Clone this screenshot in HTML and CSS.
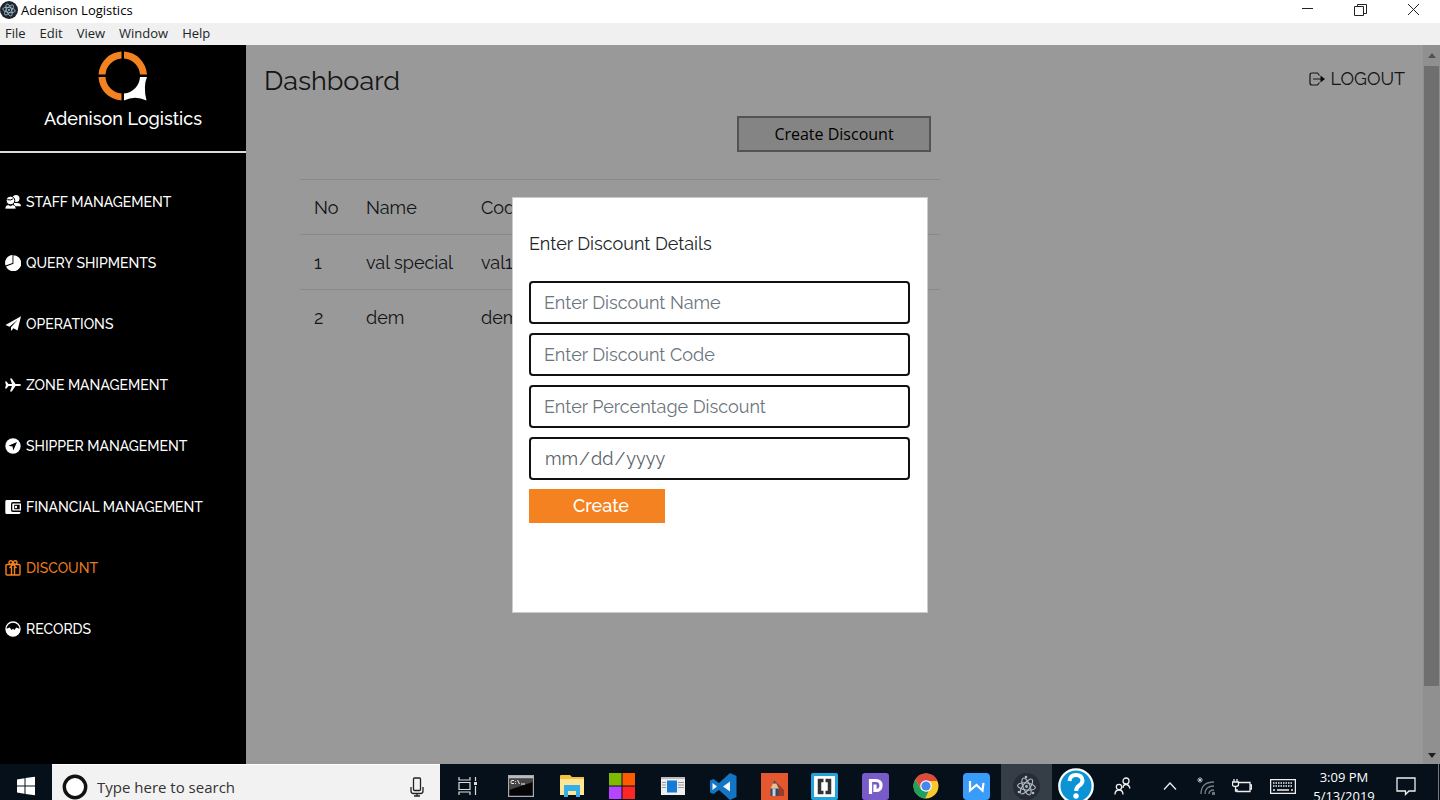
FILE: index.html
```html
<!DOCTYPE html>
<html lang="en">
<head>
<meta charset="utf-8">
<title>Adenison Logistics</title>
<link rel="stylesheet" href="styles.css">
</head>
<body>
<div class="screen">
  <header class="titlebar">
    <svg class="app-icon" viewBox="0 0 18 18" aria-hidden="true"><circle cx="9" cy="9" r="9" fill="#20242f"/><g fill="none" stroke="#9fc4cf" stroke-width=".8"><ellipse cx="9" cy="9" rx="6.3" ry="2.5" transform="rotate(10 9 9)"/><ellipse cx="9" cy="9" rx="6.3" ry="2.5" transform="rotate(70 9 9)"/><ellipse cx="9" cy="9" rx="6.3" ry="2.5" transform="rotate(130 9 9)"/></g><circle cx="9" cy="9" r="1" fill="#9fc4cf"/></svg>
    <span class="title">Adenison Logistics</span>
    <div class="window-controls">
      <button class="window-button" aria-label="Minimize"><svg width="13" height="13" viewBox="0 0 13 13"><path d="M1 4.500h11"/></svg></button>
      <button class="window-button" aria-label="Restore"><svg width="13" height="13" viewBox="0 0 13 13"><path d="M.5 2.500h9v9h-9zM3.500 2.500v-2h9v9h-3"/></svg></button>
      <button class="window-button" aria-label="Close"><svg width="13" height="13" viewBox="0 0 13 13"><path d="M1 0l11 11M12 0L1 11"/></svg></button>
    </div>
  </header>
  <nav class="menubar" aria-label="Application menu">
    <button class="menu-item">File</button>
    <button class="menu-item">Edit</button>
    <button class="menu-item">View</button>
    <button class="menu-item">Window</button>
    <button class="menu-item">Help</button>
  </nav>

  <div class="app">
    <aside class="sidebar">
      <div class="brand">
        <svg width="50" height="50" viewBox="0 0 50 50" aria-hidden="true">
          <g fill="#f58220"><path d="M23.500 .5v7A17.500 17.500 0 0 0 7.500 23.500h-7A24.500 24.500 0 0 1 23.500.5z"/><path d="M26 .5v7a17.500 17.500 0 0 1 16 16h7A24.500 24.500 0 0 0 26 .5z"/><path d="M23.500 49.500v-7A17.500 17.500 0 0 1 7.500 26h-7a24.500 24.500 0 0 0 23 23.500z"/></g>
          <path fill="#fff" d="M42 26h7q-4 9-.5 23.500Q37 44 26 49.500v-7A17.500 17.500 0 0 0 42 26z"/>
        </svg>
        <span class="brand-name">Adenison Logistics</span>
      </div>
      <nav class="nav" aria-label="Main">
        <a class="nav-link" href="#staff"><svg class="nav-icon" viewBox="0 0 16 16"><circle cx="11" cy="4.500" r="3.500"/><path d="M9 9h3c2.500 0 4 1 4 3.200H9z"/><circle cx="5.500" cy="6.500" r="4.300" stroke="#000"/><path stroke="#000" stroke-width=".7" d="M0 15c0-3 1.500-4.200 3.500-4.200Q5.500 12.500 7.500 10.800C9.500 10.800 11 12 11 15z"/><path fill="none" stroke="#000" d="M2.300 5.700q3.500 1 6-1"/></svg>Staff Management</a>
        <a class="nav-link" href="#shipments"><svg class="nav-icon" viewBox="0 0 16 16"><path d="M7.500 0v8L.5 10.500A8 8 0 0 1 7.500 0z"/><path d="M8.400.2a8 8 0 1 1-7.400 11.200L8.400 8.700z"/></svg>Query Shipments</a>
        <a class="nav-link" href="#operations"><svg class="nav-icon" viewBox="0 0 16 16"><path d="M16 .2L.5 9l4 1.700L13 3.500 6 11.300V15l2.500-2.700 4 2.200z"/></svg>Operations</a>
        <a class="nav-link" href="#zones"><svg class="nav-icon" viewBox="0 0 16 16"><path d="M0 4.500h1.500L3.500 7H7L5 1.500h1.800L10.500 7H14q2 0 2 1t-2 1h-3.500l-3.700 5.500H5L7 9H3.500l-2 2.500H0L1 8z"/></svg>Zone Management</a>
        <a class="nav-link" href="#shippers"><svg class="nav-icon" viewBox="0 0 16 16"><circle cx="8" cy="8" r="7.700"/><path fill="#000" d="M12 4L3.500 7.700l4 .8.800 4z"/></svg>Shipper Management</a>
        <a class="nav-link" href="#finance"><svg class="nav-icon" viewBox="0 0 16 16"><path d="M1.500 1H14q1.500 0 1.500 2H8Q6 3 6 5v6q0 2 2 2h7.500q0 2-1.500 2H1.500Q.3 15 .3 13.500v-11Q.3 1 1.500 1z"/><path fill-rule="evenodd" d="M8 4.500h8v7H8q-.7 0-.7-.7V5.200q0-.7.7-.7zm1.200 1.300v4.400h5.500V5.800z"/><circle cx="11" cy="8" r="1.200"/></svg>Financial Management</a>
        <a class="nav-link nav-link-active" href="#discount" aria-current="page"><svg class="nav-icon nav-icon-line" viewBox="0 0 16 16"><path d="M2 4.500h12q1 0 1 1V14q0 1-1 1H2q-1 0-1-1V5.500q0-1 1-1zM6.500 5v10M9.500 5v10M8 4.500L4.500 8M8 4.500L11.500 8"/><circle cx="5.800" cy="2.600" r="1.800"/><circle cx="10.200" cy="2.600" r="1.800"/></svg>Discount</a>
        <a class="nav-link" href="#records"><svg class="nav-icon" viewBox="0 0 16 16"><circle cx="8" cy="8" r="7" fill="none" stroke="#fff" stroke-width="1.300"/><path d="M.8 8l4-1.500L6.500 9 8 7.800 9.500 9l1.700-2.500 4 1.500a7.200 7.200 0 0 1-14.400 0z"/></svg>Records</a>
      </nav>
    </aside>

    <main class="content">
      <div class="content-head">
        <h1 class="page-title">Dashboard</h1>
        <a class="logout" href="#logout"><svg width="16" height="14" viewBox="0 0 16 14" aria-hidden="true"><path fill="none" stroke="#222" stroke-width="1.200" d="M10.500 3.500L8.500 1H3Q1 1 1 3v8q0 2 2 2h5.500l2-2.500M4 7h10"/><path fill="#111" d="M11.500 3.500L16 7l-4.500 3.500z"/></svg>LOGOUT</a>
      </div>
      <div class="discounts">
        <button class="create-discount">Create Discount</button>
        <table class="table">
          <thead><tr><th class="col-no">No</th><th class="col-name">Name</th><th>Code</th></tr></thead>
          <tbody>
            <tr><td>1</td><td>val special</td><td>val1</td></tr>
            <tr><td>2</td><td>dem</td><td>dem</td></tr>
          </tbody>
        </table>
      </div>
    </main>
    <div class="scrollbar" aria-hidden="true"><span class="arrow arrow-up"></span><span class="thumb"></span><span class="arrow arrow-down"></span></div>

    <div class="overlay">
      <form class="modal" role="dialog" aria-labelledby="modal-title">
        <h2 class="modal-title" id="modal-title">Enter Discount Details</h2>
        <input class="field" type="text" placeholder="Enter Discount Name" aria-label="Discount name">
        <input class="field" type="text" placeholder="Enter Discount Code" aria-label="Discount code">
        <input class="field" type="text" placeholder="Enter Percentage Discount" aria-label="Percentage discount">
        <input class="field field-date" type="date" aria-label="Expiry date">
        <button class="submit" type="button">Create</button>
      </form>
    </div>
  </div>

  <footer class="taskbar">
    <button class="start" aria-label="Start"><svg width="20" height="20" viewBox="0 0 20 20" fill="#fff"><path d="M1 3.500l7.500-1.200v7.200H1zM9.500 2.100L19 .8v8.700H9.500zM1 10.500h7.500v7.200L1 16.500zM9.500 10.500H19v8.700l-9.500-1.300z"/></svg></button>
    <div class="search">
      <svg width="26" height="26" viewBox="0 0 26 26" aria-hidden="true"><circle cx="13" cy="13" r="10.700" fill="#fff" stroke="#111" stroke-width="3.400"/></svg>
      <input class="search-input" type="text" placeholder="Type here to search" aria-label="Search">
      <svg width="14" height="20" viewBox="0 0 14 20" fill="none" stroke="#222" stroke-width="1.300" aria-hidden="true"><rect x="3.500" y="1" width="7" height="12.500" rx="1"/><path d="M1 10v4q0 2.500 2.500 2.500h7Q13 16.500 13 14v-4M7 16.500v2.500M4 19h6"/></svg>
    </div>
    <button class="task task-view" aria-label="Task view"><svg width="20" height="18" viewBox="0 0 20 18" fill="none" stroke="#ddd" stroke-width="1.200"><path d="M1 0v3h11V0M1 18v-3h11v3M1 5.500h11v7H1zM17.500 0v4M17.500 9v9"/><path stroke-width="3" d="M17.500 5v3"/></svg></button>
    <div class="tasks">
      <button class="task" aria-label="Command prompt"><svg width="26" height="22" viewBox="0 0 26 22"><path fill="#050505" stroke="#aaa" stroke-width="1.200" d="M.6.600h24.800v20.800H.6z"/><path fill="#bbb" d="M1 1h24v2.500H1z"/><path fill="#444" d="M1 4h24v3L1 15z"/><path fill="none" stroke="#eee" d="M6 5.500H4q-1 0-1 1v1q0 1 1 1h2M7.500 6v.8M7.500 8v.8M9.500 5l2 4M13 9h4"/></svg></button>
      <button class="task" aria-label="File Explorer"><svg width="26" height="22" viewBox="0 0 26 22"><path fill="#f5c13c" d="M1 1q0-1 1-1h9l2 2h12v5H1z"/><path fill="#ffe596" d="M1 4h24v16H1z"/><path fill="#36aee8" d="M5 22V10h16v12h-4v-6H9v6z"/></svg></button>
      <button class="task" aria-label="Color tiles"><svg width="26" height="26" viewBox="0 0 26 26"><path fill="#7fba00" d="M0 0h12.500v12.500H0z"/><path fill="#ff5a00" d="M13.500 0H26v12.500H13.500z"/><path fill="#b545ff" d="M0 13.500h12.500V26H0z"/><path fill="#ff2626" d="M13.500 13.500H26V26H13.500z"/></svg></button>
      <button class="task" aria-label="Document viewer"><svg width="24" height="18" viewBox="0 0 24 18"><path fill="#eee" d="M0 0h24v18H0z"/><path fill="#bbb" d="M0 0h24v2H0z"/><path stroke="#999" d="M1 5.500h4M1 8h4M1 10.500h4M17 5.500h6M17 8h6M17 10.500h6"/><path fill="#167bd6" d="M6 3.500h10v12H6z"/></svg></button>
      <button class="task" aria-label="Visual Studio Code"><svg width="27" height="27" viewBox="0 0 27 27"><path fill="#1476c2" d="M20 0l6.500 3v21L20 27 9 17l-5.500 4L0 19.500v-12L3.500 6 9 10z"/><path fill="#eef7ff" d="M20 8.500v10l-7-5zM2.500 10v7L7 13.500z"/></svg></button>
      <button class="task" aria-label="Sketch pad"><svg width="27" height="27" viewBox="0 0 27 27"><path fill="#e5572f" d="M0 0h27v27H0z"/><path fill="#963d2b" d="M14 8l9 9v6h-9z"/><path fill="#e6c29a" d="M13.500 7l4.500 9H9.500z"/><path fill="#37495c" d="M13.500 7l1.800 3.500h-3.500zM9.500 15.500h8V23h-8z"/><path fill="#cad2d6" d="M11.500 15.500h3V23h-3z"/></svg></button>
      <button class="task" aria-label="Brackets"><svg width="27" height="27" viewBox="0 0 27 27"><rect width="27" height="27" rx="2" fill="#23a3dc"/><path fill="#fff" d="M3 3h21v21H3z"/><path fill="none" stroke="#333" stroke-width="3.500" d="M12.500 7.500h-4v12h4M14.500 7.500h4v12h-4"/></svg></button>
      <button class="task" aria-label="Design app"><svg width="27" height="27" viewBox="0 0 27 27"><rect width="27" height="27" rx="3" fill="#785bc8"/><path fill="none" stroke="#fff" stroke-width="3.200" d="M8.500 21V7.500h5.500q5 0 5 5t-5 5h-1v-6"/></svg></button>
      <button class="task" aria-label="Chrome"><svg width="26" height="26" viewBox="0 0 26 26"><circle cx="13" cy="13" r="12.500" fill="#fbc92d"/><path fill="#dd4b3e" d="M2.200 6.700A12.500 12.500 0 0 1 24.500 8H13L7.500 15z"/><path fill="#1f9f60" d="M2.200 6.700L8.500 17l7 1.500-3.500 7A12.500 12.500 0 0 1 2.200 6.700z"/><circle cx="13" cy="13" r="5.800" fill="#fff"/><circle cx="13" cy="13" r="4.600" fill="#4387f2"/></svg></button>
      <button class="task" aria-label="Writer"><svg width="27" height="27" viewBox="0 0 27 27"><rect width="27" height="27" rx="4" fill="#399cfb"/><path fill="none" stroke="#fff" stroke-width="2.200" d="M7 8v9.500l6.500-5.500 6 5.500 1-7.500"/></svg></button>
      <button class="task task-active" aria-label="Adenison Logistics"><svg width="27" height="27" viewBox="0 0 27 27"><circle cx="13.500" cy="13.500" r="13.500" fill="#272b36"/><g fill="none" stroke="#aebdc5" stroke-width="1.100"><ellipse cx="13.500" cy="13.500" rx="9" ry="3.500" transform="rotate(8 13.500 13.500)"/><ellipse cx="13.500" cy="13.500" rx="9" ry="3.500" transform="rotate(68 13.500 13.500)"/><ellipse cx="13.500" cy="13.500" rx="9" ry="3.500" transform="rotate(128 13.500 13.500)"/></g><g fill="#aebdc5"><circle cx="13.500" cy="13.500" r="1.400"/><circle cx="20" cy="20" r="1.300"/><circle cx="6" cy="19" r="1.300"/><circle cx="13" cy="4" r="1.300"/></g></svg></button>
    </div>
    <div class="tray">
      <button class="tray-item tray-help" aria-label="Help"><svg width="36" height="36" viewBox="0 0 36 36"><circle cx="18" cy="18" r="16.700" fill="#0b93d6" stroke="#fff" stroke-width="2.300"/><path fill="none" stroke="#fff" stroke-width="4" d="M11.500 13q.5-6 6.500-6t6.500 5.500q0 3-3.500 5.200-2.800 1.800-2.800 5.300"/><circle cx="18" cy="28" r="2.700" fill="#fff"/></svg></button>
      <button class="tray-item tray-people" aria-label="People"><svg width="18" height="18" viewBox="0 0 18 18"><circle cx="12" cy="4" r="3"/><circle cx="5" cy="10" r="2.700"/><path d="M9 11q0-3.500 3-3.500t4 4M1 17.500Q1 13 5 13t4 4.500"/></svg></button>
      <button class="tray-item" aria-label="Show hidden icons"><svg width="14" height="8" viewBox="0 0 14 8"><path d="M1 7.500l6-6.500 6 6.500"/></svg></button>
      <button class="tray-item" aria-label="Network"><svg width="18" height="18" viewBox="0 0 18 18"><path class="muted" d="M4 17q0-12 13-12M8 17q0-8 9-8M12 17q0-4 5-4"/><circle class="muted" cx="16.500" cy="16.500" r="1"/><path class="thin" d="M3 0v6M0 3h6M1 1l4 4M5 1L1 5"/></svg></button>
      <button class="tray-item" aria-label="Battery"><svg width="20" height="14" viewBox="0 0 20 14"><path d="M7 3.500h11v9H5V10M18 6h1.500v4H18M2 0v3M5 0v3M.5 3h6v2.500q0 2-3 2t-3-2zM3.500 8v4H5"/></svg></button>
      <button class="tray-item tray-keyboard" aria-label="Touch keyboard"><svg width="26" height="15" viewBox="0 0 26 15"><path d="M.6.600h24.800v13.800H.6z"/><path stroke-dasharray="1.500 1" d="M3 4h20M3 7h20"/><path d="M3 11h2M7 11h12M21 11h2"/></svg></button>
      <div class="clock"><span>3:09 PM</span><span>5/13/2019</span></div>
      <button class="tray-item tray-notify" aria-label="Notifications"><svg width="20" height="19" viewBox="0 0 20 19"><path d="M1 1h18v13h-6l-3.500 3.500V14H1z"/></svg></button>
      <span class="show-desktop"></span>
    </div>
  </footer>
</div>
</body>
</html>
```

FILE: styles.css
```css
* {
  box-sizing: border-box;
}

body {
  margin: 0;
  font-family: Raleway, Lato, sans-serif;
  font-size: 18px;
  color: #212529;
}

button,
input {
  margin: 0;
  padding: 0;
  border: 0;
  background: none;
  color: inherit;
  font: inherit;
}

a {
  color: inherit;
  text-decoration: none;
}

.screen {
  display: flex;
  flex-direction: column;
  height: 100vh;
  overflow: hidden;
}

/* Window frame */
.titlebar,
.menubar,
.create-discount,
.taskbar {
  font-family: "Segoe UI", "Open Sans", sans-serif;
}

.titlebar {
  display: flex;
  flex: none;
  align-items: flex-start;
  gap: 3px;
  height: 23px;
  background: #fff;
  color: #000;
  font-size: 13px;
}

.app-icon {
  width: 18px;
  height: 20px;
}

.title {
  line-height: 20px;
}

.window-controls {
  display: flex;
  margin-left: auto;
}

.window-button {
  display: flex;
  align-items: center;
  justify-content: center;
  width: 53px;
  height: 20px;
}

.window-button svg {
  fill: none;
  stroke: #222;
}

.menubar {
  display: flex;
  flex: none;
  align-items: flex-start;
  gap: 14px;
  height: 22px;
  padding: 0 5px;
  background: #f0f0f0;
  font-size: 13px;
  line-height: 21px;
}

/* Application */
.app {
  position: relative;
  display: flex;
  flex: 1;
  min-height: 0;
}

.sidebar {
  position: relative;
  z-index: 2;
  flex: none;
  width: 246px;
  background: #000;
  color: #fff;
  font-weight: 500;
}

.brand {
  display: flex;
  flex-direction: column;
  align-items: center;
  gap: 6px;
  height: 108px;
  padding-top: 6px;
  border-bottom: 2px solid #ddd;
}

.brand-name {
  line-height: 24px;
}

.nav {
  display: flex;
  flex-direction: column;
  gap: 37px;
  padding: 37px 5px;
}

.nav-link {
  display: flex;
  align-items: center;
  gap: 5px;
  font-size: 14px;
  line-height: 24px;
  text-transform: uppercase;
}

.nav-icon {
  width: 16px;
  height: 16px;
  fill: #fff;
}

.nav-link-active {
  color: #e87b1c;
}

.nav-icon-line {
  fill: none;
  stroke: #f58220;
  stroke-width: 1.4;
}

.content {
  flex: 1;
  padding: 16px 18px;
  background: #fff;
}

.content-head {
  display: flex;
  align-items: flex-start;
  justify-content: space-between;
}

.page-title {
  margin: 0;
  font-size: 27px;
  font-weight: 400;
  line-height: 40px;
}

.logout {
  display: flex;
  align-items: center;
  gap: 6px;
  line-height: 36px;
}

.discounts {
  display: flex;
  flex-direction: column;
  gap: 27px;
  max-width: 676px;
  padding: 15px 0 0 36px;
}

.create-discount {
  align-self: flex-end;
  width: 194px;
  height: 36px;
  margin-right: 9px;
  border: 2px solid #8a8a8a;
  background: #ddd;
  color: #000;
  font-size: 16px;
}

.table {
  width: 100%;
  border-collapse: collapse;
  table-layout: fixed;
}

.table th,
.table td {
  height: 55px;
  padding: 0 14px;
  border-top: 1px solid #e4e4e4;
  font-weight: 400;
  text-align: left;
  white-space: nowrap;
}

.table .col-no {
  width: 52px;
  padding-right: 0;
}

.table .col-name {
  width: 115px;
}

.scrollbar {
  display: flex;
  flex: none;
  flex-direction: column;
  align-items: center;
  width: 17px;
  padding: 8px 1px 6px;
  background: #f1f1f1;
}

.thumb {
  width: 15px;
  height: 88%;
  margin-top: 8px;
  background: #bababa;
}

.arrow {
  border: 4px solid transparent;
}

.arrow-up {
  border-top: 0;
  border-bottom: 5px solid #888;
}

.arrow-down {
  margin-top: auto;
  border-top: 5px solid #333;
  border-bottom: 0;
}

.overlay {
  position: absolute;
  inset: 0;
  display: grid;
  place-items: center;
  background: rgba(0, 0, 0, 0.4);
}

.modal {
  display: flex;
  flex-direction: column;
  gap: 9px;
  width: 416px;
  min-height: 416px;
  padding: 32px 17px 32px 16px;
  border: 1px solid #ccc;
  background: #fff;
}

.modal-title {
  margin: 0 0 14px;
  font-size: 18px;
  font-weight: 400;
  line-height: 28px;
}

.field {
  width: 100%;
  height: 43px;
  padding: 0 13px;
  border: 2px solid #111;
  border-radius: 4px;
  background: #fff;
}

.field::placeholder {
  color: #6c757d;
  opacity: 1;
}

.field-date {
  color: #5b6269;
}

.field-date::-webkit-calendar-picker-indicator {
  display: none;
}

.submit {
  width: 136px;
  height: 34px;
  padding-left: 8px;
  background: #f48220;
  color: #fff;
  font-weight: 500;
}

/* Taskbar */
.taskbar {
  display: flex;
  flex: none;
  height: 36px;
  overflow: hidden;
  background: #05101a;
}

.taskbar > *,
.task {
  height: 44px;
}

.start {
  display: flex;
  flex: none;
  align-items: center;
  justify-content: center;
  width: 52px;
}

.search {
  display: flex;
  flex: none;
  align-items: center;
  gap: 9px;
  width: 388px;
  padding: 0 16px 0 10px;
  border-top: 1px solid #fff;
  background: #f2f2f2;
}

.search-input {
  flex: 1;
  height: 40px;
  font-size: 15px;
}

.search-input::placeholder {
  color: #333;
  opacity: 1;
}

.task {
  display: flex;
  flex: 1;
  align-items: center;
  justify-content: center;
}

.task-view {
  flex: none;
  width: 56px;
}

.tasks {
  display: flex;
  flex: none;
  width: 556px;
}

.task-active {
  background: #353e47;
}

.tray {
  display: flex;
  align-items: center;
  margin-left: auto;
  color: #fff;
}

.tray-item {
  display: flex;
  align-items: center;
  justify-content: center;
  width: 36px;
  height: 44px;
}

.tray-item svg {
  fill: none;
  stroke: #eee;
  stroke-width: 1.3;
}

.tray-item .muted {
  stroke: #777f84;
}

.tray-item .thin {
  stroke-width: 0.7;
}

.tray-help {
  width: 48px;
}

.tray-help svg {
  stroke: none;
}

.tray-people {
  width: 46px;
}

.tray-people + .tray-item {
  width: 42px;
  padding-left: 6px;
}

.tray-keyboard {
  width: 46px;
}

.clock {
  display: flex;
  flex-direction: column;
  align-items: center;
  width: 76px;
  padding-top: 2px;
  font-size: 13px;
  line-height: 19px;
}

.tray-notify {
  width: 48px;
}

.show-desktop {
  width: 5px;
  height: 44px;
  margin-left: 8px;
  border-left: 1px solid #777;
}
```
